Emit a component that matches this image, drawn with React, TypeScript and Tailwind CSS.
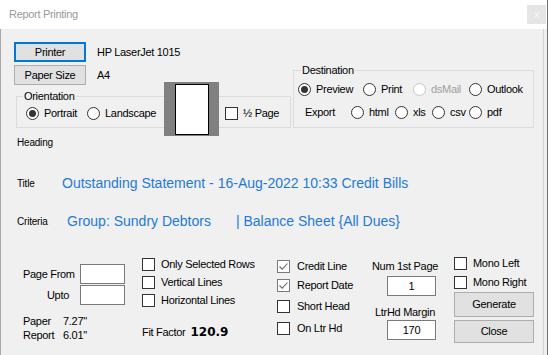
import React from 'react';

function Radio({ checked = false, disabled = false }: { checked?: boolean; disabled?: boolean }) {
  return (
    <span
      className={`flex h-[13px] w-[13px] shrink-0 items-center justify-center rounded-full border bg-white ${
        disabled ? 'border-[#c6c6c6]' : 'border-[#333333]'
      }`}
    >
      {checked && <span className="h-[7px] w-[7px] rounded-full bg-[#333333]" />}
    </span>
  );
}

function Check({ checked = false }: { checked?: boolean }) {
  return (
    <span
      className={`flex h-[13px] w-[13px] shrink-0 items-center justify-center border bg-white ${
        checked ? 'border-[#7a7a7a]' : 'border-[#333333]'
      }`}
    >
      {checked && (
        <svg width="11" height="11" viewBox="0 0 11 11">
          <path d="M1.5 5.5 L4.2 8.2 L9.5 2.5" fill="none" stroke="#6a6a6a" strokeWidth="1.1" />
        </svg>
      )}
    </span>
  );
}

function Opt({
  label,
  width,
  checked,
  disabled,
}: {
  label: string;
  width: string;
  checked?: boolean;
  disabled?: boolean;
}) {
  return (
    <div className={`flex items-center gap-[5px] ${width}`}>
      <Radio checked={checked} disabled={disabled} />
      <span className={disabled ? 'text-[#a0a0a0]' : ''}>{label}</span>
    </div>
  );
}

function CheckRow({ label, checked, h, gap }: { label: string; checked?: boolean; h: string; gap: string }) {
  return (
    <div className={`flex items-center ${h} ${gap}`}>
      <Check checked={checked} />
      <span>{label}</span>
    </div>
  );
}

export default function App() {
  return (
    <div className="relative h-[355px] w-[548px] overflow-hidden whitespace-nowrap border-r border-[#6e6e6e] bg-white font-['Liberation_Sans',Arial,sans-serif] text-[11px] tracking-[-0.3px] text-black">
      {/* title bar */}
      <div className="flex h-[29px] items-center justify-between">
        <span className="ml-[9px] text-[11px] text-[#999999]">Report Printing</span>
        <div className="mr-[1px] flex h-[19px] w-[19px] items-center justify-center bg-[#e5e5e5] text-[11px] leading-none text-[#f8f8f8]">
          x
        </div>
      </div>

      <div className="flex h-[326px] border-l border-[#a9a9a9] bg-[#f0f0f0]">
        <div className="flex w-[543px] flex-col border-r border-[#d3d3d3]">
          {/* printer / orientation / destination */}
          <div className="flex">
            <div className="ml-[13px] mt-[13px] flex flex-col">
              <div className="flex h-[20px] items-center">
                <button className="h-[20px] w-[72px] border-2 border-[#0078d7] bg-[#e1e1e1]">Printer</button>
                <span className="ml-[11px]">HP LaserJet 1015</span>
              </div>
              <div className="mt-[3px] flex h-[20px] items-center">
                <button className="h-[20px] w-[72px] border border-[#adadad] bg-[#e1e1e1]">Paper Size</button>
                <span className="ml-[11px]">A4</span>
              </div>
              <div className="relative ml-[2px] mt-[4px] w-[275px]">
                <fieldset className="border border-[#dcdcdc] pb-[4px]">
                  <legend className="ml-[6px] px-[1px] leading-[14px]">Orientation</legend>
                  <div className="flex h-[20px] items-center pl-[9px]">
                    <div className="flex w-[138px] items-center">
                      <Opt label="Portrait" width="w-[61px]" checked />
                      <Opt label="Landscape" width="" />
                    </div>
                    <div className="w-[61px]" />
                    <div className="flex items-center gap-[5px]">
                      <Check />
                      <span>½ Page</span>
                    </div>
                  </div>
                </fieldset>
                {/* paper preview */}
                <div className="absolute left-[148px] top-[-7px] h-[54px] w-[55px] bg-[#808080] pl-[11px] pt-[2px]">
                  <div className="h-[51px] w-[34px] border border-black bg-white" />
                </div>
              </div>
            </div>

            <div className="ml-[2px] mt-[34px] w-[241px]">
              <fieldset className="border border-[#dcdcdc] pb-[3px]">
                <legend className="ml-[7px] px-[1px] leading-[14px]">Destination</legend>
                <div className="flex h-[24px] items-center pl-[4px]">
                  <Opt label="Preview" width="w-[65px]" checked />
                  <Opt label="Print" width="w-[50px]" />
                  <Opt label="dsMail" width="w-[56px]" disabled />
                  <Opt label="Outlook" width="" />
                </div>
                <div className="flex h-[23px] items-center pl-[11px]">
                  <span className="w-[46px]">Export</span>
                  <Opt label="html" width="w-[44px]" />
                  <Opt label="xls" width="w-[37px]" />
                  <Opt label="csv" width="w-[37px]" />
                  <Opt label="pdf" width="" />
                </div>
              </fieldset>
            </div>
          </div>

          {/* heading / title / criteria */}
          <div className="ml-[16px] mt-[6px] flex h-[16px] items-center text-[10px] tracking-[-0.2px]">Heading</div>
          <div className="mt-[23px] flex h-[20px] items-center pl-[16px]">
            <span className="w-[45px] text-[10px] tracking-[-0.2px]">Title</span>
            <span className="text-[14px] tracking-normal text-[#1f7ad6]">
              Outstanding Statement - 16-Aug-2022 10:33 Credit Bills
            </span>
          </div>
          <div className="mt-[18px] flex h-[20px] items-center pl-[16px]">
            <span className="w-[50px] text-[10px] tracking-[-0.2px]">Criteria</span>
            <span className="text-[14px] tracking-normal text-[#1f7ad6]">Group: Sundry Debtors</span>
            <span className="ml-[25px] text-[14px] tracking-normal text-[#1f7ad6]">| Balance Sheet {'{All Dues}'}</span>
          </div>

          {/* bottom options */}
          <div className="mt-[24px] flex items-start">
            <div className="ml-[22px] flex w-[102px] shrink-0 flex-col">
              <div className="mt-[9px] flex h-[20px] items-center">
                <span className="w-[50px] text-right">Page From</span>
                <div className="ml-[7px] h-[20px] w-[45px] border border-[#7a7a7a] bg-white" />
              </div>
              <div className="mt-[1px] flex h-[20px] items-center">
                <span className="w-[50px] pr-[4px] text-right">Upto</span>
                <div className="ml-[7px] h-[20px] w-[45px] border border-[#7a7a7a] bg-white" />
              </div>
              <div className="mt-[9px] flex h-[14px] items-center">
                <span className="w-[40px]">Paper</span>
                <span>7.27"</span>
              </div>
              <div className="flex h-[14px] items-center">
                <span className="w-[40px]">Report</span>
                <span>6.01"</span>
              </div>
            </div>

            <div className="ml-[17px] flex w-[135px] shrink-0 flex-col">
              <CheckRow label="Only Selected Rows" h="h-[18px]" gap="gap-[6px]" />
              <CheckRow label="Vertical Lines" h="h-[18px]" gap="gap-[6px]" />
              <CheckRow label="Horizontal Lines" h="h-[18px]" gap="gap-[6px]" />
              <div className="mt-[14px] flex h-[18px] items-center">
                <span>Fit Factor</span>
                <span className="ml-[5px] font-['DejaVu_Sans',sans-serif] text-[12px] font-bold tracking-normal">120.9</span>
              </div>
            </div>

            <div className="flex w-[95px] shrink-0 flex-col">
              <div className="mt-[1px]">
                <CheckRow label="Credit Line" checked h="h-[20px]" gap="gap-[7px]" />
              </div>
              <CheckRow label="Report Date" checked h="h-[19px]" gap="gap-[7px]" />
              <CheckRow label="Short Head" h="h-[22px]" gap="gap-[7px]" />
              <CheckRow label="On Ltr Hd" h="h-[22px]" gap="gap-[7px]" />
            </div>

            <div className="flex w-[66px] shrink-0 flex-col">
              <div className="mt-[1px] flex h-[20px] items-center justify-center">Num 1st Page</div>
              <div className="ml-[15px] flex h-[20px] w-[49px] items-center justify-center border border-[#7a7a7a] bg-white">1</div>
              <div className="mt-[8px] flex h-[16px] items-center justify-center">LtrHd Margin</div>
              <div className="ml-[15px] flex h-[20px] w-[49px] items-center justify-center border border-[#7a7a7a] bg-white">170</div>
            </div>

            <div className="ml-[16px] flex w-[80px] shrink-0 flex-col">
              <CheckRow label="Mono Left" h="h-[17px]" gap="gap-[6px]" />
              <CheckRow label="Mono Right" h="h-[20px]" gap="gap-[6px]" />
              <button className="h-[25px] w-[80px] border border-[#adadad] bg-[#e1e1e1]">Generate</button>
              <button className="mt-[3px] h-[23px] w-[80px] border border-[#adadad] bg-[#e1e1e1]">Close</button>
            </div>
          </div>
        </div>
      </div>
    </div>
  );
}
